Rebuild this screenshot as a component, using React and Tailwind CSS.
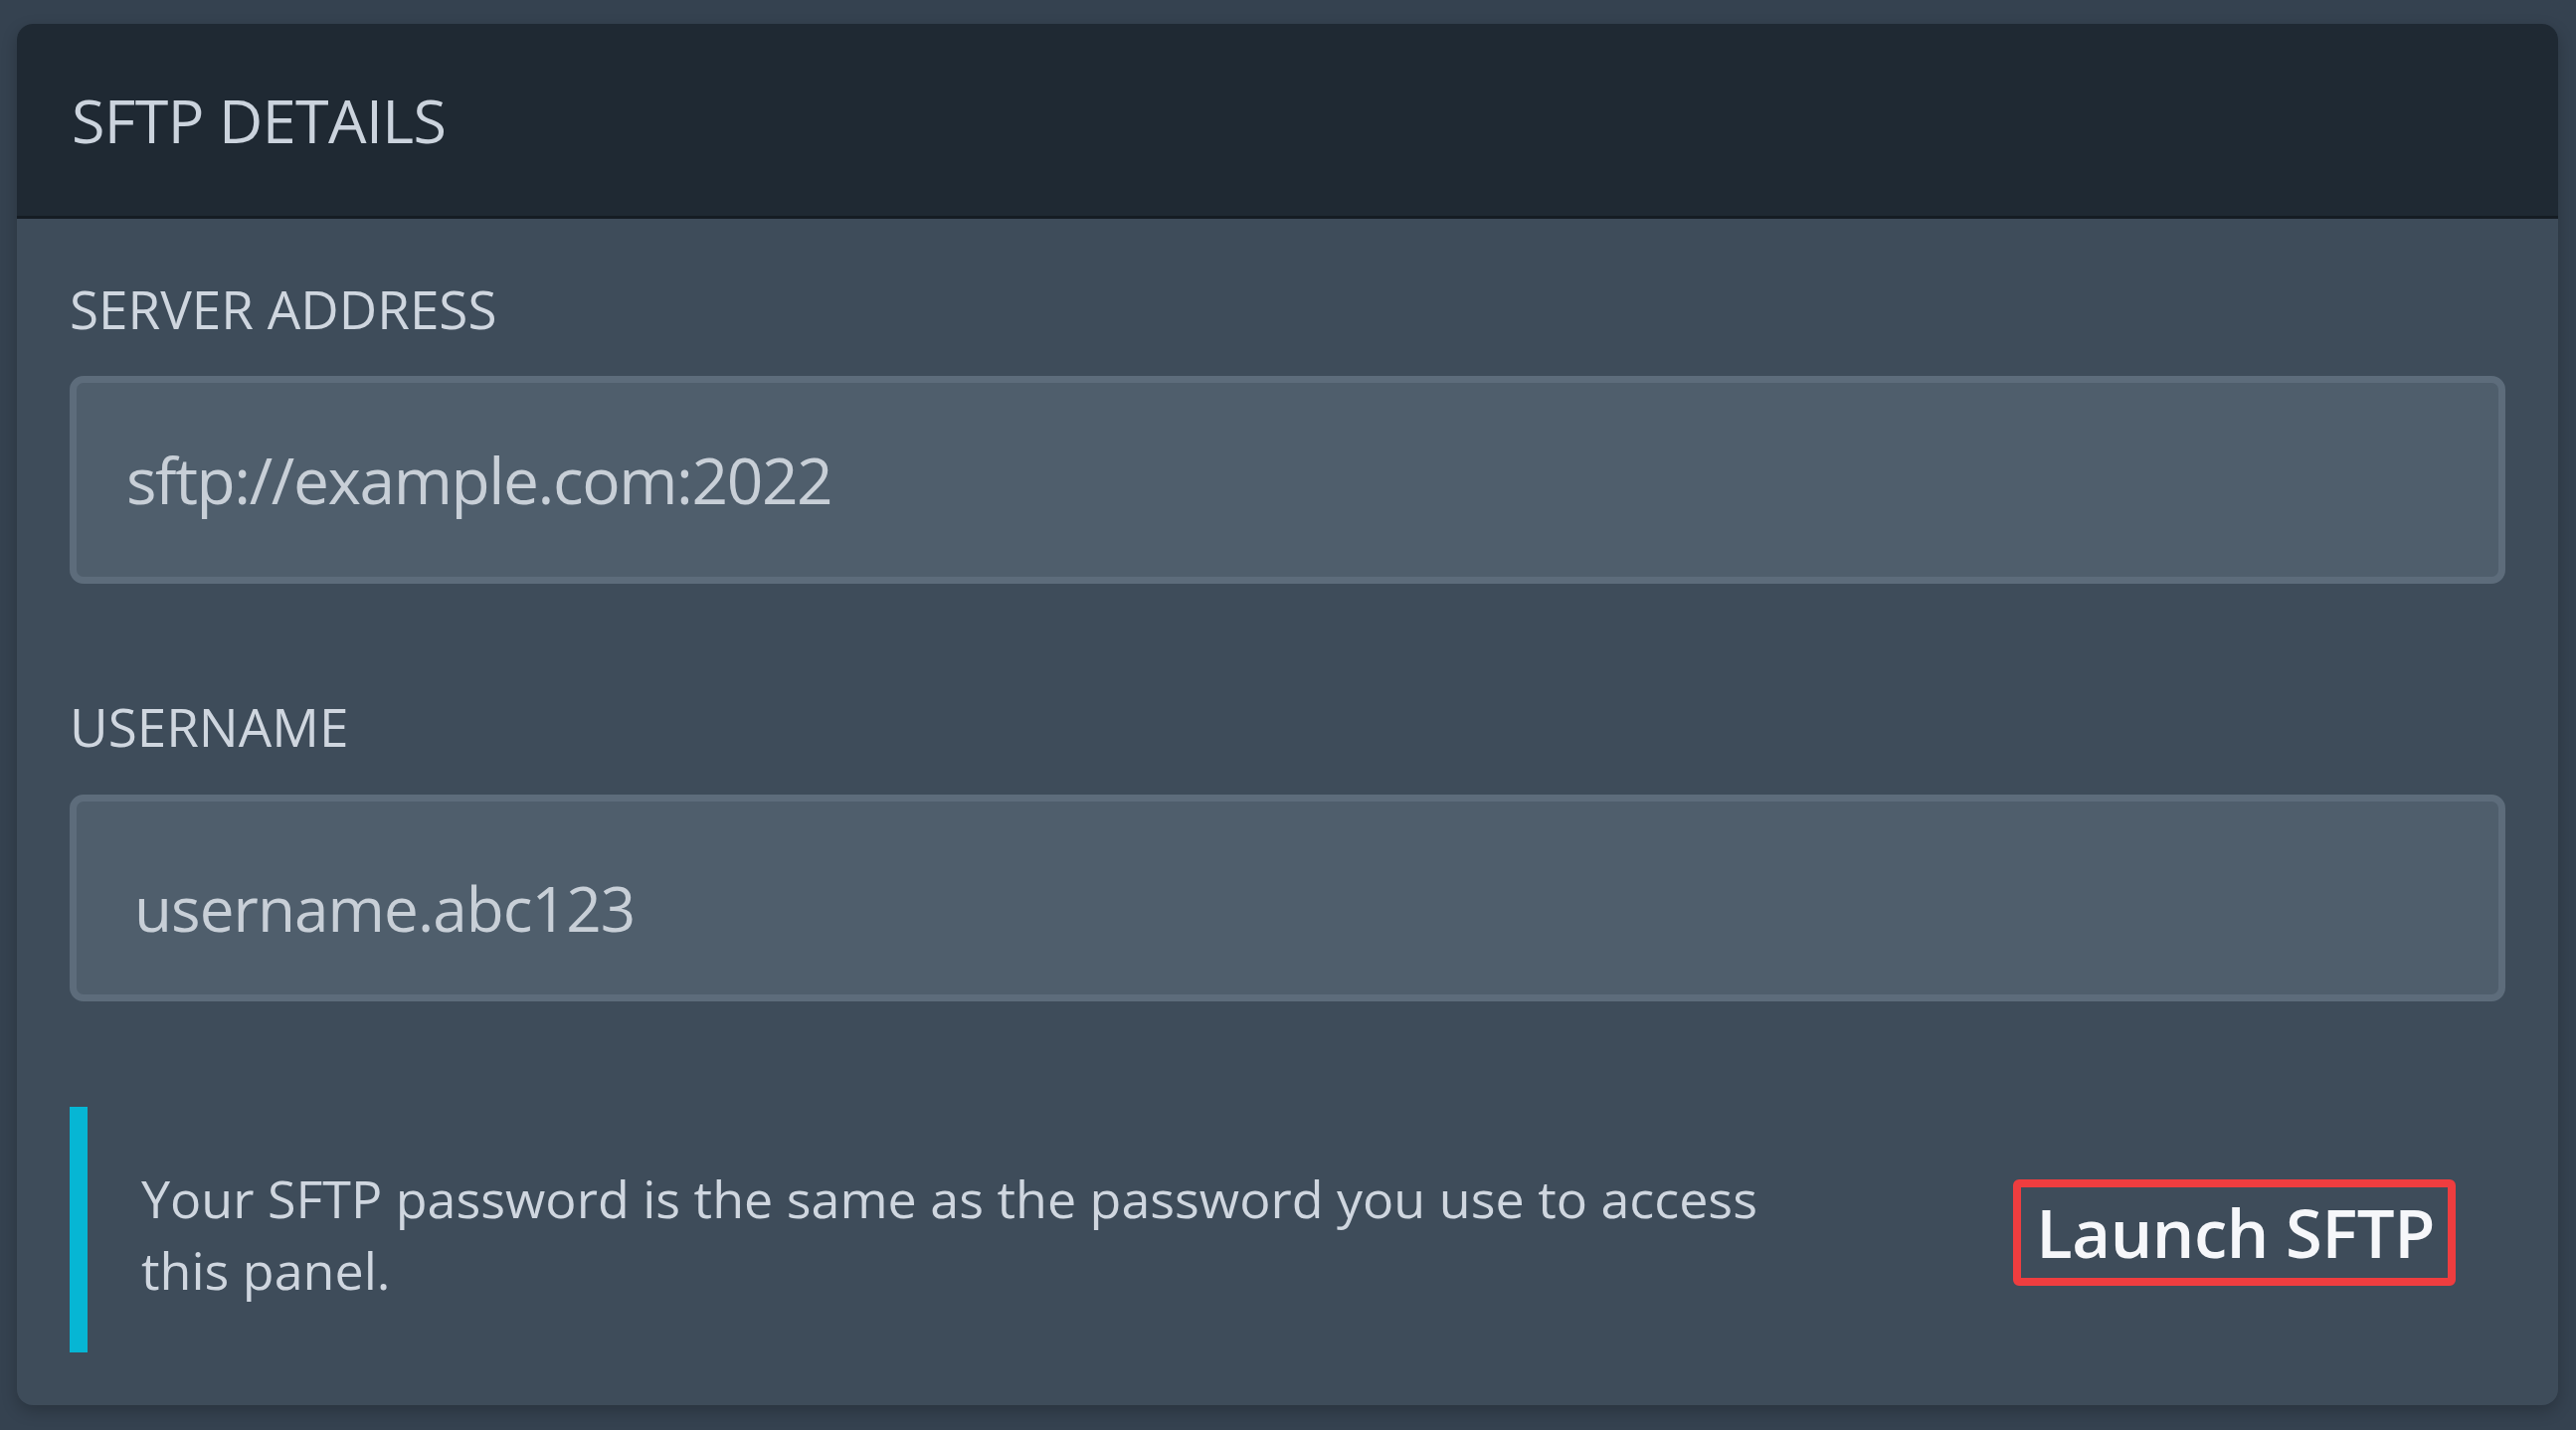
export default function App() {
  return (
    <div className="min-h-screen w-full bg-[#354250] pt-[24px] pb-[25px] pl-[17px] pr-[18px] font-['Open_Sans','Noto_Sans',sans-serif]">
      <div className="rounded-[16px] bg-[#3e4c5a] shadow-[0_6px_16px_rgba(0,0,0,0.22)] overflow-hidden">
        <div className="h-[196px] flex items-center px-[55px] bg-[#1f2933] border-b-[3px] border-[#151c23]">
          <h2 className="text-[61px] leading-none tracking-[-0.01em] text-[#cbd3dd] font-normal">SFTP DETAILS</h2>
        </div>
        <div className="px-[53px] pt-[55px] pb-[53px]">
          <label className="block text-[53px] leading-[72px] tracking-normal text-[#cfd6df]">SERVER ADDRESS</label>
          <input
            readOnly
            value="sftp://example.com:2022"
            className="mt-[31px] block w-full h-[209px] border-[7px] border-[#5d6c7b] bg-[#4f5e6c] rounded-[14px] pl-[50px] text-[64px] tracking-[-0.022em] text-[#c8cfd7] outline-none"
          />
          <label className="mt-[108px] block text-[53px] leading-[72px] tracking-normal text-[#cfd6df]">USERNAME</label>
          <input
            readOnly
            value="username.abc123"
            className="mt-[32px] block w-full h-[208px] border-[7px] border-[#5d6c7b] bg-[#4f5e6c] rounded-[14px] pl-[58px] pt-[20px] text-[62px] tracking-[-0.015em] text-[#c8cfd7] outline-none"
          />
          <div className="mt-[106px] flex items-center">
            <div className="w-[18px] h-[247px] bg-[#06b6d4] shrink-0" />
            <p className="ml-[54px] mt-[9px] w-[1680px] text-[52px] leading-[72px] tracking-normal text-[#cfd6df]">
              Your SFTP password is the same as the password you use to access this panel.
            </p>
            <button className="ml-auto mr-[50px] mt-[5px] border-[8px] border-[#ef3d3f] rounded-[6px] pl-[15px] pr-[13px] text-[67px] leading-[91px] font-semibold tracking-[-0.006em] text-[#f6f7fa] whitespace-nowrap">
              Launch SFTP
            </button>
          </div>
        </div>
      </div>
    </div>
  );
}
